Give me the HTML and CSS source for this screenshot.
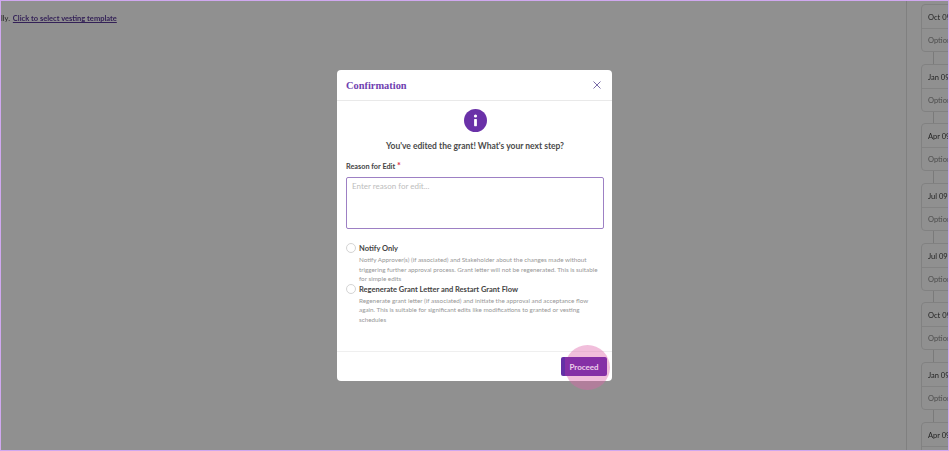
FILE: index.html
```html
<!DOCTYPE html>
<html>
<head>
<meta http-equiv="Content-Type" content="text/html; charset=UTF-8">
<meta name="viewport" content="width=device-width, initial-scale=1.0">
<title>Edit grant</title>
<link rel="stylesheet" href="styles.css">
</head>
<body>
<div class="frame">
    <div class="page">
        <div class="main">
            <span class="cut">lly.</span>
            <a class="template-link" href="javascript:void(0)">Click to select vesting template</a>
        </div>
        <div class="timeline">
            <div class="card"><div class="card-date">Oct 09, 2025</div><div class="card-type">Options</div></div>
            <div class="link"></div>
            <div class="card"><div class="card-date">Jan 09, 2026</div><div class="card-type">Options</div></div>
            <div class="link"></div>
            <div class="card"><div class="card-date">Apr 09, 2026</div><div class="card-type">Options</div></div>
            <div class="link"></div>
            <div class="card"><div class="card-date">Jul 09, 2026</div><div class="card-type">Options</div></div>
            <div class="link"></div>
            <div class="card"><div class="card-date">Jul 09, 2026</div><div class="card-type">Options</div></div>
            <div class="link"></div>
            <div class="card"><div class="card-date">Oct 09, 2026</div><div class="card-type">Options</div></div>
            <div class="link"></div>
            <div class="card"><div class="card-date">Jan 09, 2027</div><div class="card-type">Options</div></div>
            <div class="link"></div>
            <div class="card"><div class="card-date">Apr 09, 2027</div><div class="card-type">Options</div></div>
        </div>
    </div>

    <div class="modal-background">
        <div class="modal-content">
            <div class="modal-head">
                <span class="modal-title">Confirmation</span>
                <svg class="close" width="10" height="10" viewBox="0 0 10 10"><path d="M1.5 1.5L8.5 8.5M8.5 1.5L1.5 8.5"/></svg>
            </div>
            <div class="modal-body">
                <div class="info-icon">
                    <svg width="23" height="23" viewBox="0 0 23 23"><circle cx="11.5" cy="11.5" r="11.5" fill="#6a31a8"/><circle cx="11.5" cy="7" r="1.6" fill="#fff"/><rect x="10.1" y="10" width="2.8" height="7.2" rx="0.6" fill="#fff"/></svg>
                </div>
                <h3 class="question">You've edited the grant! What's your next step?</h3>
                <label class="field-label">Reason for Edit <span class="req">*</span></label>
                <textarea class="reason" placeholder="Enter reason for edit..."></textarea>
                <div class="choice">
                    <span class="radio"></span>
                    <div>
                        <div class="choice-name">Notify Only</div>
                        <div class="choice-text">Notify Approver(s) (if associated) and Stakeholder about the changes made without triggering further approval process. Grant letter will not be regenerated. This is suitable for simple edits</div>
                    </div>
                </div>
                <div class="choice">
                    <span class="radio"></span>
                    <div>
                        <div class="choice-name">Regenerate Grant Letter and Restart Grant Flow</div>
                        <div class="choice-text">Regenerate grant letter (if associated) and initiate the approval and acceptance flow again. This is suitable for significant edits like modifications to granted or vesting schedules</div>
                    </div>
                </div>
            </div>
            <div class="modal-foot">
                <span class="click-mark"></span>
                <button class="proceed">Proceed</button>
            </div>
        </div>
    </div>
</div>
</body>
</html>
```
FILE: styles.css
```css
html, body {
    margin: 0;
    height: 100%;
}

body {
    font-family: Lato, "Liberation Sans", sans-serif;
    color: #3d3d3d;
    background: #fff;
}

.frame {
    position: relative;
    box-sizing: border-box;
    height: 100vh;
    border: 1px solid #d0a8f0;
    overflow: hidden;
    filter: blur(0.5px);
}

.page {
    display: flex;
    height: 100%;
    overflow: hidden;
}

.main {
    flex: 1;
    padding-top: 12px;
    font-size: 7.5px;
    line-height: 12px;
    white-space: nowrap;
}

.cut {
    margin-right: 1px;
}

.template-link {
    color: #5b3a9a;
    font-weight: 700;
    text-decoration: underline;
}

.timeline {
    flex: none;
    box-sizing: border-box;
    width: 42px;
    padding: 3px 0 0 14px;
    border-left: 1px solid #e2e2e2;
}

.card {
    width: 90px;
    height: 48px;
    border: 1px solid #e4e4e4;
    border-radius: 4px;
    box-sizing: border-box;
    font-size: 7.5px;
}

.card-date {
    height: 24px;
    line-height: 25px;
    padding-left: 6px;
    border-bottom: 1px solid #e8e8e8;
    box-sizing: border-box;
    white-space: nowrap;
}

.card-type {
    line-height: 23px;
    padding-left: 6px;
    color: #8a8a8a;
}

.link {
    width: 1px;
    height: 11.7px;
    margin-left: 12px;
    background: #d9d9d9;
}

.modal-background {
    position: absolute;
    inset: 0;
    background-color: rgba(0,0,0,0.435);
}

.modal-content {
    position: absolute;
    left: 336px;
    top: 69px;
    display: flex;
    flex-direction: column;
    width: 275px;
    height: 311px;
    background: #fff;
    border-radius: 4px;
}

.modal-head {
    display: flex;
    align-items: center;
    justify-content: space-between;
    flex: none;
    height: 31px;
    padding: 0 10px 0 9px;
    border-bottom: 1px solid #e9e9e9;
    box-sizing: border-box;
}

.modal-title {
    font-family: "Liberation Serif", serif;
    font-size: 10.4px;
    font-weight: 700;
    color: #6f3fb0;
}

.close {
    fill: none;
    stroke: #7a6ca8;
    stroke-width: 1;
}

.modal-body {
    flex: 1;
    padding: 8px 8px 0 9px;
}

.info-icon {
    height: 23px;
    text-align: center;
}

.question {
    margin: 8px 0 0;
    font-size: 8.5px;
    line-height: 12px;
    font-weight: 700;
    text-align: center;
    color: #4a4a4a;
}

.field-label {
    display: block;
    margin-top: 9px;
    font-size: 7.3px;
    line-height: 12px;
    font-weight: 700;
    color: #444;
}

.req {
    color: #e0304a;
    font-size: 9px;
    line-height: 8px;
}

.reason {
    display: block;
    width: 100%;
    height: 52px;
    margin: 4px 0 14px;
    padding: 3px 5px;
    box-sizing: border-box;
    border: 1.5px solid #9d80c4;
    border-radius: 2px;
    font-family: inherit;
    font-size: 8px;
    resize: none;
}

.reason::placeholder {
    color: #bdbdbd;
}

.choice {
    display: flex;
    gap: 3px;
}

.radio {
    flex: none;
    width: 8px;
    height: 8px;
    border: 1px solid #d4d4d4;
    border-radius: 50%;
}

.choice-name {
    font-size: 7.5px;
    line-height: 11px;
    font-weight: 700;
    color: #444;
}

.choice-text {
    margin-top: 1px;
    font-size: 6.3px;
    line-height: 9.6px;
    color: #979797;
}

.modal-foot {
    position: relative;
    display: flex;
    justify-content: flex-end;
    align-items: center;
    flex: none;
    height: 30px;
    padding-right: 5px;
    border-top: 1px solid #efefef;
    box-sizing: border-box;
}

.proceed {
    position: relative;
    width: 46px;
    height: 19px;
    padding: 0;
    border: 0;
    border-radius: 2px;
    background: linear-gradient(90deg, #6430a6 8%, #8530a6 8%);
    color: #eed0ea;
    font-family: inherit;
    font-size: 8px;
    font-weight: 700;
}

.click-mark {
    position: absolute;
    right: 2px;
    top: -7px;
    width: 45px;
    height: 45px;
    border-radius: 50%;
    background: rgba(222,100,170,0.42);
}
```
